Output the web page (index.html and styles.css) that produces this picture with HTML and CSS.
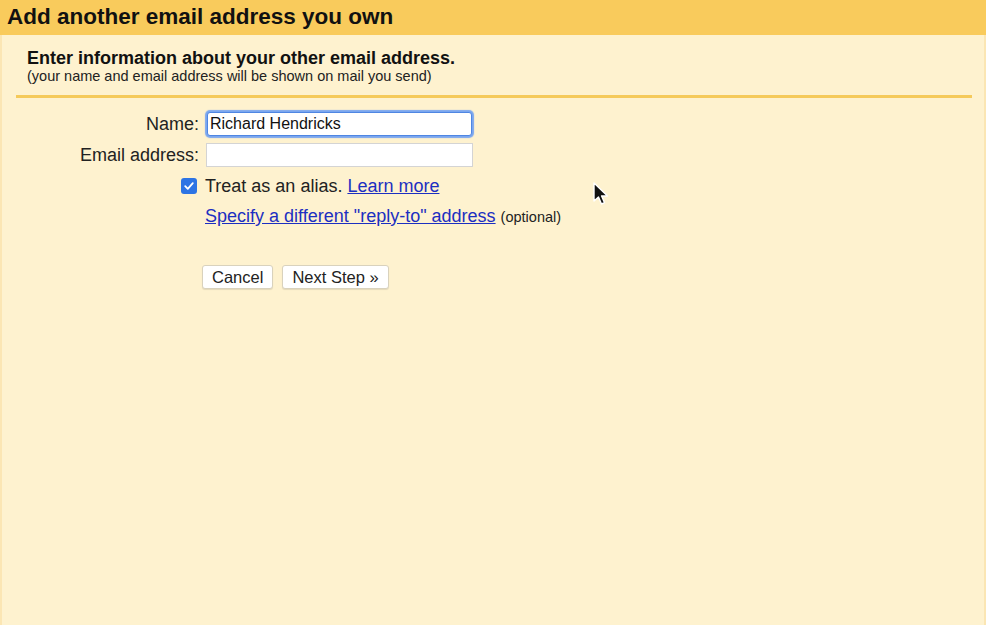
FILE: index.html
```html
<!DOCTYPE html>
<html>

<head>
    <title>Add another email address</title>
    <link rel="stylesheet" href="styles.css">
</head>

<body>
    <div class="page">
        <div class="header">Add another email address you own</div>
        <div class="intro">
            <h2>Enter information about your other email address.</h2>
            <div class="note">(your name and email address will be shown on mail you send)</div>
        </div>
        <div class="divider"></div>
        <form class="form">
            <label for="name">Name:</label>
            <input type="text" id="name" class="focused" value="Richard Hendricks">
            <label for="email">Email address:</label>
            <input type="text" id="email">
            <span class="check-cell">
                <span class="checkbox">
                    <svg width="12" height="12" viewBox="0 0 12 12"><path d="M2.2 6.2 L4.8 8.8 L9.8 3.2" fill="none" stroke="#fff" stroke-width="1.8" stroke-linecap="round" stroke-linejoin="round"/></svg>
                </span>
            </span>
            <div class="alias">Treat as an alias. <a href="#">Learn more</a></div>
            <span></span>
            <div class="reply"><a href="#">Specify a different "reply-to" address</a> <span class="optional">(optional)</span></div>
            <span></span>
            <div class="buttons">
                <button type="button">Cancel</button>
                <button type="button">Next Step &raquo;</button>
            </div>
        </form>
        <svg class="cursor" width="20" height="26" viewBox="0 0 20 26">
            <path d="M2 1 L2 19 L6.5 15 L9.5 22 L12.5 20.6 L9.6 14 L15.5 14 Z" fill="#111" stroke="#fff" stroke-width="1.4" stroke-linejoin="round"/>
        </svg>
    </div>
</body>

</html>
```

FILE: styles.css
```css
body {
    margin: 0;
    font-family: "Liberation Sans", Arial, sans-serif;
    background: #fef2cf;
}

.page {
    position: relative;
    height: 625px;
    background: #fef2cf;
    border-left: 2px solid #fbe6b4;
    border-right: 2px solid #fbe6b4;
    box-sizing: border-box;
}

.header {
    background: #f9cb5c;
    height: 35px;
    line-height: 34px;
    margin: 0 -2px;
    padding-left: 7px;
    font-size: 22.5px;
    font-weight: bold;
    color: #111111;
}

.intro {
    padding: 13px 0 0 25px;
}

h2 {
    margin: 0;
    font-size: 18px;
    line-height: 20px;
    color: #111111;
}

.note {
    font-size: 14.5px;
    line-height: 16px;
    color: #222222;
}

.divider {
    height: 3px;
    background: #f5ca5a;
    margin: 11px 12px 0 14px;
}

.form {
    display: grid;
    grid-template-columns: 197px 1fr;
    column-gap: 6px;
    row-gap: 7px;
    padding-top: 14px;
    align-items: center;
}

label {
    text-align: right;
    font-size: 18px;
    color: #222222;
}

input[type="text"] {
    width: 267px;
    height: 24px;
    box-sizing: border-box;
    border: 1px solid #d4d4d4;
    background: #ffffff;
    font-family: "Liberation Sans", Arial, sans-serif;
    font-size: 16px;
    padding: 2px 2px;
    color: #111111;
    margin-left: 1px;
}

input.focused {
    border: 1px solid #4f86e2;
    box-shadow: 0 0 1px 2px #7aa6ef;
    border-radius: 3px;
    margin-left: 2px;
    width: 265px;
}

.check-cell {
    display: flex;
    justify-content: flex-end;
    padding-right: 2px;
}

.checkbox {
    width: 16px;
    height: 16px;
    background: #2d74e4;
    border-radius: 3px;
    display: flex;
    align-items: center;
    justify-content: center;
}

.alias {
    font-size: 18px;
    color: #222222;
    line-height: 24px;
}

a {
    color: #1c2fc1;
    text-decoration: underline;
}

.reply {
    font-size: 18px;
    line-height: 22px;
}

.optional {
    font-size: 14.5px;
    color: #222222;
}

.buttons {
    display: flex;
    gap: 9px;
    margin-top: 30px;
    margin-left: -3px;
}

button {
    font-family: "Liberation Sans", Arial, sans-serif;
    font-size: 16.5px;
    color: #222222;
    background: #ffffff;
    border: 1px solid #d9d2bd;
    border-radius: 3px;
    height: 24px;
    padding: 0 9px;
    box-shadow: 0 1px 1px rgba(0, 0, 0, 0.1);
}

.cursor {
    position: absolute;
    left: 590px;
    top: 182px;
}
```
